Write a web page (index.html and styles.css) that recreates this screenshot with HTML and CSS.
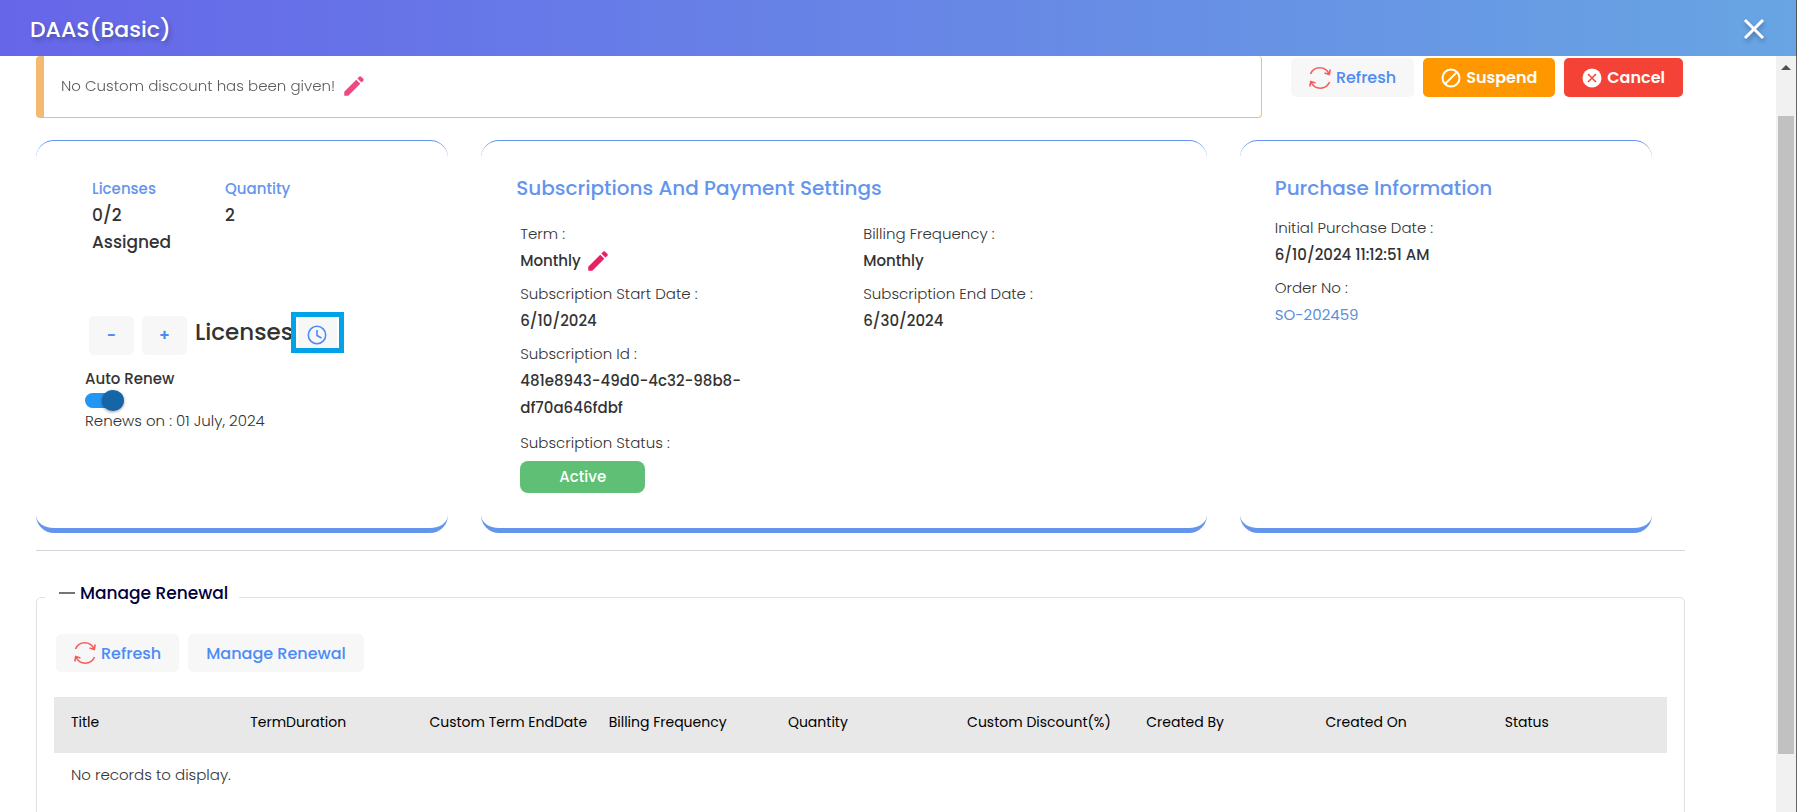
FILE: index.html
```html
<!DOCTYPE html>
<html lang="en">
<head>
    <meta charset="UTF-8">
    <meta name="viewport" content="width=device-width, initial-scale=1.0">
    <title>DAAS(Basic)</title>
    <link rel="stylesheet" href="styles.css">
</head>
<body>
    <header class="header">
        <h1>DAAS(Basic)</h1>
        <button type="button" class="close" aria-label="Close">
            <svg width="24" height="24" viewBox="0 0 24 24"><path d="M3 3L21 21M21 3L3 21" fill="none" stroke="#fff" stroke-width="3"/></svg>
        </button>
    </header>
    <div class="page">
        <main class="content">
            <div class="top-row">
                <div class="notice">
                    <span>No Custom discount has been given!</span>
                    <button type="button" class="edit" aria-label="Edit discount">
                        <svg width="26" height="26" viewBox="0 0 24 24"><path fill="#e91e63" d="M3 17.25V21h3.75L17.81 9.94l-3.75-3.75L3 17.25zM20.71 7.04a1 1 0 0 0 0-1.41l-2.34-2.34a1 1 0 0 0-1.41 0l-1.83 1.83 3.75 3.75 1.83-1.83z"/></svg>
                    </button>
                </div>
                <div class="actions">
                    <button type="button" class="btn">
                        <svg width="22" height="24" viewBox="0 0 22 24" fill="none" stroke="#f55d5d" stroke-width="1.6"><path d="M1.5 8A10 10 0 0 1 20 8M20.5 16A10 10 0 0 1 2 16M21.2 3.500L20.300 8.500L15.500 7M0.800 20.500L1.700 15.500L6.500 17"/></svg>
                        Refresh
                    </button>
                    <button type="button" class="btn suspend">
                        <svg width="20" height="20" viewBox="0 0 20 20" fill="none" stroke="#fff" stroke-width="2"><circle cx="10" cy="10" r="8.5"/><path d="M4 16L16 4"/></svg>
                        Suspend
                    </button>
                    <button type="button" class="btn cancel">
                        <svg width="20" height="20" viewBox="0 0 20 20"><circle cx="10" cy="10" r="9.5" fill="#fff"/><path d="M6 6l8 8M14 6l-8 8" stroke="#f44336" stroke-width="1.5"/></svg>
                        Cancel
                    </button>
                </div>
            </div>

            <div class="cards">
                <section class="card license-card">
                    <div class="counts">
                        <div>
                            <h3>Licenses</h3>
                            <p>0/2 Assigned</p>
                        </div>
                        <div>
                            <h3>Quantity</h3>
                            <p>2</p>
                        </div>
                    </div>
                    <div class="stepper">
                        <button type="button" class="btn step">-</button>
                        <button type="button" class="btn step">+</button>
                        <span class="stepper-label">Licenses</span>
                        <div class="history">
                            <button type="button" class="btn clock" aria-label="License history">
                                <svg width="20" height="20" viewBox="0 0 20 20" fill="none" stroke="#4c8bf5" stroke-width="1.6"><circle cx="10" cy="10" r="8.7"/><path d="M10 5v5.5l4.5 2.5"/></svg>
                            </button>
                        </div>
                    </div>
                    <div class="renew">
                        <label for="autoRenew">Auto Renew</label>
                        <input type="checkbox" id="autoRenew" class="switch" checked>
                        <span>Renews on : 01 July, 2024</span>
                    </div>
                </section>

                <section class="card">
                    <h2>Subscriptions And Payment Settings</h2>
                    <div class="settings">
                        <dl>
                            <dt>Term :</dt>
                            <dd class="with-icon">Monthly
                                <button type="button" class="edit" aria-label="Edit term">
                                    <svg width="26" height="26" viewBox="0 0 24 24"><path fill="#e91e63" d="M3 17.25V21h3.75L17.81 9.94l-3.75-3.75L3 17.25zM20.71 7.04a1 1 0 0 0 0-1.41l-2.34-2.34a1 1 0 0 0-1.41 0l-1.83 1.83 3.75 3.75 1.83-1.83z"/></svg>
                                </button>
                            </dd>
                            <dt>Subscription Start Date :</dt>
                            <dd>6/10/2024</dd>
                            <dt>Subscription Id :</dt>
                            <dd class="sub-id">481e8943-49d0-4c32-98b8-df70a646fdbf</dd>
                            <dt>Subscription Status :</dt>
                            <dd class="status">Active</dd>
                        </dl>
                        <dl>
                            <dt>Billing Frequency :</dt>
                            <dd>Monthly</dd>
                            <dt>Subscription End Date :</dt>
                            <dd>6/30/2024</dd>
                        </dl>
                    </div>
                </section>

                <section class="card purchase-card">
                    <h2>Purchase Information</h2>
                    <dl>
                        <dt>Initial Purchase Date :</dt>
                        <dd>6/10/2024 11:12:51 AM</dd>
                        <dt>Order No :</dt>
                        <dd><a href="#">SO-202459</a></dd>
                    </dl>
                </section>
            </div>

            <hr>

            <fieldset class="renewal">
                <legend><span class="dash"></span>Manage Renewal</legend>
                <div class="renewal-body">
                    <div class="toolbar">
                        <button type="button" class="btn">
                            <svg width="22" height="24" viewBox="0 0 22 24" fill="none" stroke="#f55d5d" stroke-width="1.6"><path d="M1.5 8A10 10 0 0 1 20 8M20.5 16A10 10 0 0 1 2 16M21.2 3.500L20.300 8.500L15.500 7M0.800 20.500L1.700 15.500L6.500 17"/></svg>
                            Refresh
                        </button>
                        <button type="button" class="btn">Manage Renewal</button>
                    </div>
                    <table>
                        <thead>
                            <tr>
                                <th>Title</th>
                                <th>TermDuration</th>
                                <th>Custom Term EndDate</th>
                                <th>Billing Frequency</th>
                                <th>Quantity</th>
                                <th>Custom Discount(%)</th>
                                <th>Created By</th>
                                <th>Created On</th>
                                <th>Status</th>
                            </tr>
                        </thead>
                        <tbody>
                            <tr>
                                <td colspan="9">No records to display.</td>
                            </tr>
                        </tbody>
                    </table>
                </div>
            </fieldset>
        </main>
        <div class="scrollbar" aria-hidden="true">
            <div class="thumb"></div>
        </div>
    </div>
</body>
</html>
```
FILE: styles.css
```css
*, *::before, *::after {
    box-sizing: border-box;
}
body {
    margin: 0;
    height: 100vh;
    display: flex;
    flex-direction: column;
    overflow: hidden;
    font-family: Poppins, Inter, sans-serif;
    font-size: 15px;
    line-height: 27px;
    color: #333;
    background-color: #fff;
}
h1, h2, h3, p, dl, dd {
    margin: 0;
}
button {
    font-family: inherit;
    border: none;
    cursor: pointer;
}
svg {
    display: block;
    flex-shrink: 0;
}
.header {
    display: flex;
    align-items: center;
    justify-content: space-between;
    flex-shrink: 0;
    height: 56px;
    padding: 2px 30px 0;
    color: #fff;
    background: linear-gradient(90deg, #6666e9, #68a5e3);
    border-right: 1px solid #555;
}
.header h1 {
    font-size: 22px;
    font-weight: 500;
    text-shadow: 2px 3px 4px rgba(0, 0, 0, 0.25);
}
.close {
    padding: 0;
    background: none;
    filter: drop-shadow(1px 3px 2px rgba(0, 0, 0, 0.25));
}
.page {
    display: flex;
    flex: 1;
    min-height: 0;
    border-right: 1px solid #666;
}
.content {
    flex: 1;
    min-width: 0;
    overflow: hidden;
    padding: 0 91px 0 36px;
}

/* top row */
.top-row {
    display: flex;
    align-items: flex-start;
    gap: 29px;
    margin-bottom: 22px;
    padding-right: 2px;
}
.notice {
    display: flex;
    align-items: center;
    gap: 6px;
    flex: 1;
    height: 62px;
    padding: 0 0 2px 17px;
    font-weight: 300;
    border: 1px solid #f4bb70;
    border-top: none;
    border-left-width: 8px;
    border-radius: 4px;
}
.notice span,
.notice .edit {
    opacity: 0.8;
}
.edit {
    padding: 0;
    background: none;
}
.actions {
    display: flex;
    gap: 9px;
    padding-top: 2px;
}
.btn {
    display: flex;
    align-items: center;
    justify-content: center;
    gap: 5px;
    height: 39px;
    padding: 0 18px;
    font-size: 16px;
    font-weight: 500;
    color: #4c8bf5;
    background-color: #f7f7f7;
    border-radius: 5px;
}
.suspend {
    font-weight: 600;
    color: #fff;
    background-color: #ff9800;
}
.cancel {
    font-weight: 600;
    color: #fff;
    background-color: #f44336;
}

/* cards */
.cards {
    display: grid;
    grid-template-columns: 25% 44% 25%;
    column-gap: 2%;
}
.card {
    padding: 34px 35px 35px;
    border-top: 1px solid #6495ed;
    border-bottom: 5px solid #6495ed;
    border-radius: 18px;
}
.card h2 {
    font-size: 20px;
    font-weight: 500;
    color: #6495ed;
}
.license-card {
    padding-left: 49px;
}
.counts {
    display: flex;
    gap: 33px;
    padding-left: 7px;
}
.counts div {
    width: 100px;
}
.counts h3 {
    font-size: 15px;
    font-weight: 500;
    color: #6495ed;
}
.counts p {
    font-size: 17px;
    font-weight: 500;
}
.stepper {
    display: flex;
    margin: 60px 0 13px 4px;
}
.step {
    width: 45px;
    margin-right: 8px;
    padding: 0;
    font-weight: 600;
}
.stepper-label {
    font-size: 23px;
    font-weight: 500;
    line-height: 33px;
}
.history {
    position: relative;
    margin-left: 5px;
}
.history::after {
    content: "";
    position: absolute;
    top: -4px;
    left: -7px;
    width: 53px;
    height: 41px;
    border: 5px solid #00a2e8;
}
.clock {
    width: 39px;
    padding: 0 0 1px;
}
.renew {
    display: flex;
    flex-direction: column;
    align-items: flex-start;
    line-height: 21px;
    font-weight: 300;
}
.renew label {
    font-weight: 500;
}
.switch {
    appearance: none;
    display: flex;
    align-items: center;
    width: 36px;
    height: 15px;
    margin: 4px 0 2px;
    background-color: #2196f3;
    border-radius: 8px;
    cursor: pointer;
}
.switch::before {
    content: "";
    flex-shrink: 0;
    width: 22px;
    height: 21px;
    border-radius: 50%;
    background-color: #b0b0b0;
    box-shadow: 0 1px 3px rgba(0, 0, 0, 0.4);
}
.switch:checked::before {
    margin-left: 17px;
    background-color: #1565a7;
}
.settings {
    display: grid;
    grid-template-columns: 224px 1fr;
    column-gap: 119px;
    padding: 18px 0 0 4px;
}
.purchase-card dl {
    padding-top: 12px;
}
dt {
    font-weight: 300;
}
dd {
    margin-bottom: 6px;
    font-weight: 500;
}
.with-icon {
    display: flex;
    align-items: center;
    gap: 4px;
}
dd a {
    color: #5b8fdb;
    font-weight: 400;
    text-decoration: none;
}
dd.sub-id {
    margin-bottom: 8px;
}
dd.status {
    width: 125px;
    margin: 5px 0 0;
    line-height: 32px;
    text-align: center;
    color: #fff;
    background-color: #5fbf74;
    border-radius: 8px;
}
hr {
    margin: 17px 0 32px;
    border: none;
    border-top: 1px solid #d5d5de;
}

/* manage renewal */
.renewal {
    margin: 0;
    min-width: 0;
    padding: 0 8px 32px;
    border: 1px solid #e0e0e0;
    border-radius: 5px;
}
legend {
    display: flex;
    align-items: center;
    gap: 5px;
    padding: 0 11px 8px 14px;
    font-size: 17px;
    font-weight: 500;
    line-height: 20px;
    color: #00003c;
}
.dash {
    width: 16px;
    height: 2px;
    background-color: #757575;
}
.renewal-body {
    padding: 23px 9px 0;
}
.toolbar {
    display: flex;
    gap: 9px;
    margin: 0 2px 25px;
}
.toolbar .btn {
    height: 38px;
}
table {
    width: 100%;
    table-layout: fixed;
    border-collapse: collapse;
}
th {
    height: 56px;
    padding: 0 0 6px 17px;
    font-size: 14px;
    font-weight: 400;
    text-align: left;
    white-space: nowrap;
    color: #000;
    background-color: #e8e8e8;
}
td {
    padding: 8px 17px;
    font-weight: 300;
}

/* scrollbar */
.scrollbar {
    display: flex;
    flex-direction: column;
    width: 20px;
    padding: 9px 2px 58px;
    background-color: #f1f1f1;
}
.scrollbar::before {
    content: "";
    align-self: center;
    border: 5px solid transparent;
    border-top-width: 0;
    border-bottom-color: #505050;
}
.thumb {
    flex: 1;
    margin-top: 46px;
    background-color: #c1c1c1;
}
```
